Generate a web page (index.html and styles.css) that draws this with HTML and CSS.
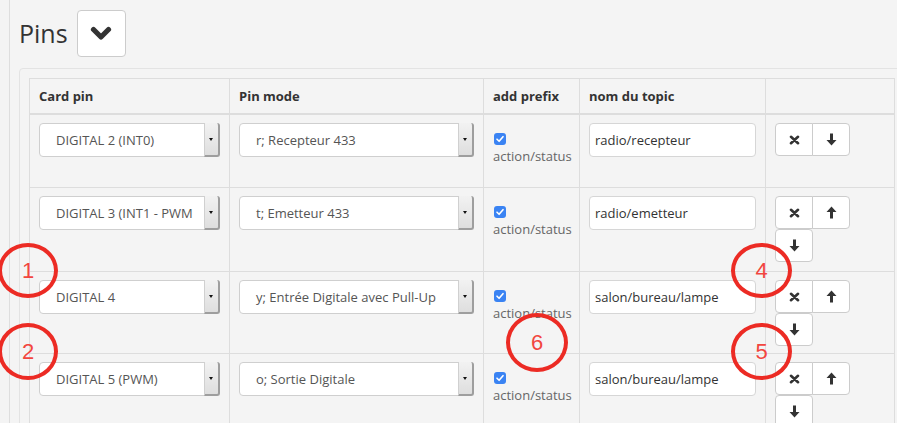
FILE: index.html
```html
<!DOCTYPE html>
<html lang="fr">
<head>
<meta charset="utf-8">
<title>Pins</title>
<link rel="stylesheet" href="styles.css">
</head>
<body>
<div class="page">
  <div class="main">
    <div class="heading">
      <h2>Pins</h2>
      <button class="toggle" type="button" aria-label="toggle">
        <svg width="22" height="15" viewBox="0 0 22 15"><polyline points="3.5,3.5 11,11 18.5,3.5" fill="none" stroke="#333" stroke-width="5.2" stroke-linecap="round" stroke-linejoin="round"/></svg>
      </button>
    </div>
    <div class="panel">
      <table class="pins">
        <colgroup>
          <col class="c-pin"><col class="c-mode"><col class="c-prefix"><col class="c-topic"><col class="c-act">
        </colgroup>
        <thead>
          <tr><th>Card pin</th><th>Pin mode</th><th>add prefix</th><th>nom du topic</th><th></th></tr>
        </thead>
        <tbody>
          <tr>
            <td><div class="select"><span class="sel-text">DIGITAL 2 (INT0)</span><span class="sel-btn"></span></div></td>
            <td><div class="select"><span class="sel-text">r; Recepteur 433</span><span class="sel-btn"></span></div></td>
            <td><div class="prefix"><span class="check"><svg width="12" height="12" viewBox="0 0 12 12"><polyline points="3,6.2 5.1,8.3 9,3.7" fill="none" stroke="#fff" stroke-width="1.6" stroke-linecap="round" stroke-linejoin="round"/></svg></span><span class="prefix-label">action/status</span></div></td>
            <td><div class="input">radio/recepteur</div></td>
            <td><div class="actions">
              <button class="btn first" type="button"><svg width="11" height="10" viewBox="0 0 11 10"><path d="M2 1.8L9 8.2M9 1.8L2 8.2" stroke="#333" stroke-width="2.6" stroke-linecap="round"/></svg></button><button class="btn last" type="button"><svg width="11" height="13" viewBox="0 0 11 13"><path d="M4 0.5h3v6.5h3.5L5.5 12.5 0.5 7H4z" fill="#333"/></svg></button>
            </div></td>
          </tr>
          <tr>
            <td><div class="select"><span class="sel-text">DIGITAL 3 (INT1 - PWM</span><span class="sel-btn"></span></div></td>
            <td><div class="select"><span class="sel-text">t; Emetteur 433</span><span class="sel-btn"></span></div></td>
            <td><div class="prefix"><span class="check"><svg width="12" height="12" viewBox="0 0 12 12"><polyline points="3,6.2 5.1,8.3 9,3.7" fill="none" stroke="#fff" stroke-width="1.6" stroke-linecap="round" stroke-linejoin="round"/></svg></span><span class="prefix-label">action/status</span></div></td>
            <td><div class="input">radio/emetteur</div></td>
            <td><div class="actions">
              <button class="btn first" type="button"><svg width="11" height="10" viewBox="0 0 11 10"><path d="M2 1.8L9 8.2M9 1.8L2 8.2" stroke="#333" stroke-width="2.6" stroke-linecap="round"/></svg></button><button class="btn last" type="button"><svg width="11" height="13" viewBox="0 0 11 13"><path d="M5.5 0.5L10.5 6H7v6.5H4V6H0.5z" fill="#333"/></svg></button><button class="btn alone" type="button"><svg width="11" height="13" viewBox="0 0 11 13"><path d="M4 0.5h3v6.5h3.5L5.5 12.5 0.5 7H4z" fill="#333"/></svg></button>
            </div></td>
          </tr>
          <tr class="tight">
            <td><div class="select"><span class="sel-text">DIGITAL 4</span><span class="sel-btn"></span></div></td>
            <td><div class="select"><span class="sel-text">y; Entrée Digitale avec Pull-Up</span><span class="sel-btn"></span></div></td>
            <td><div class="prefix"><span class="check"><svg width="12" height="12" viewBox="0 0 12 12"><polyline points="3,6.2 5.1,8.3 9,3.7" fill="none" stroke="#fff" stroke-width="1.6" stroke-linecap="round" stroke-linejoin="round"/></svg></span><span class="prefix-label">action/status</span></div></td>
            <td><div class="input">salon/bureau/lampe</div></td>
            <td><div class="actions">
              <button class="btn first" type="button"><svg width="11" height="10" viewBox="0 0 11 10"><path d="M2 1.8L9 8.2M9 1.8L2 8.2" stroke="#333" stroke-width="2.6" stroke-linecap="round"/></svg></button><button class="btn last" type="button"><svg width="11" height="13" viewBox="0 0 11 13"><path d="M5.5 0.5L10.5 6H7v6.5H4V6H0.5z" fill="#333"/></svg></button><button class="btn alone" type="button"><svg width="11" height="13" viewBox="0 0 11 13"><path d="M4 0.5h3v6.5h3.5L5.5 12.5 0.5 7H4z" fill="#333"/></svg></button>
            </div></td>
          </tr>
          <tr>
            <td><div class="select"><span class="sel-text">DIGITAL 5 (PWM)</span><span class="sel-btn"></span></div></td>
            <td><div class="select"><span class="sel-text">o; Sortie Digitale</span><span class="sel-btn"></span></div></td>
            <td><div class="prefix"><span class="check"><svg width="12" height="12" viewBox="0 0 12 12"><polyline points="3,6.2 5.1,8.3 9,3.7" fill="none" stroke="#fff" stroke-width="1.6" stroke-linecap="round" stroke-linejoin="round"/></svg></span><span class="prefix-label">action/status</span></div></td>
            <td><div class="input">salon/bureau/lampe</div></td>
            <td><div class="actions">
              <button class="btn first" type="button"><svg width="11" height="10" viewBox="0 0 11 10"><path d="M2 1.8L9 8.2M9 1.8L2 8.2" stroke="#333" stroke-width="2.6" stroke-linecap="round"/></svg></button><button class="btn last" type="button"><svg width="11" height="13" viewBox="0 0 11 13"><path d="M5.5 0.5L10.5 6H7v6.5H4V6H0.5z" fill="#333"/></svg></button><button class="btn alone" type="button"><svg width="11" height="13" viewBox="0 0 11 13"><path d="M4 0.5h3v6.5h3.5L5.5 12.5 0.5 7H4z" fill="#333"/></svg></button>
            </div></td>
          </tr>
        </tbody>
      </table>
    </div>
  </div>
</div>
<div class="mark m1">1</div>
<div class="mark m2">2</div>
<div class="mark m4">4</div>
<div class="mark m5">5</div>
<div class="mark m6">6</div>
</body>
</html>
```

FILE: styles.css
```css
html, body {
  margin: 0;
  padding: 0;
}
body {
  background: #f4f4f4;
  font-family: "Open Sans", "DejaVu Sans", sans-serif;
  font-size: 13px;
  color: #333;
  overflow: hidden;
  width: 897px;
  height: 423px;
  position: relative;
}
.page {
  padding-left: 9px;
}
.main {
  border-left: 1px solid #dedede;
  height: 423px;
  box-sizing: border-box;
  padding: 10px 0 0 9px;
}
.heading {
  display: flex;
  align-items: center;
  gap: 9px;
  margin-bottom: 11px;
}
.heading h2 {
  margin: 0;
  font-size: 25px;
  font-weight: 400;
  line-height: 47px;
  color: #333;
}
.toggle {
  width: 49px;
  height: 47px;
  background: #fff;
  border: 1px solid #ccc;
  border-radius: 4px;
  padding: 0;
  display: flex;
  align-items: center;
  justify-content: center;
}
.panel {
  width: 885px;
  box-sizing: border-box;
  border: 1px solid #e3e3e3;
  border-radius: 4px;
  padding: 9px;
  background: #f4f4f4;
}
.pins {
  border-collapse: collapse;
  table-layout: fixed;
  width: 865px;
}
.c-pin { width: 200px; }
.c-mode { width: 254px; }
.c-prefix { width: 96px; }
.c-topic { width: 186px; }
.c-act { width: 129px; }
.pins th, .pins td {
  border: 1px solid #ddd;
  padding: 8px 9px 9px;
  text-align: left;
  vertical-align: top;
}
.pins th {
  font-weight: 700;
  line-height: 18px;
  padding-bottom: 8px;
  border-bottom-width: 2px;
  color: #333;
}
.pins tr.tight td {
  padding-bottom: 7px;
}
.select {
  display: flex;
  height: 34px;
  box-sizing: border-box;
  background: #fff;
  border: 1px solid #cfcfcf;
  border-radius: 4px;
  color: #555;
  line-height: 32px;
}
.sel-text {
  flex: 1;
  min-width: 0;
  overflow: hidden;
  white-space: nowrap;
  padding-left: 16px;
}
.sel-btn {
  width: 13px;
  flex: none;
  background: linear-gradient(#f2f2f2, #dedede);
  border-left: 1px solid #d0d0d0;
  border-right: 2px solid #9e9e9e;
  border-bottom: 2px solid #9e9e9e;
  border-radius: 0 3px 3px 0;
  margin: -1px -1px -1px 0;
  position: relative;
}
.sel-btn::after {
  content: "";
  position: absolute;
  left: 4px;
  top: 15px;
  border-left: 2.5px solid transparent;
  border-right: 2.5px solid transparent;
  border-top: 3px solid #111;
}
.prefix {
  margin: 10px 0 12px;
  display: flex;
  flex-direction: column;
  align-items: flex-start;
}
.check {
  width: 12px;
  height: 12px;
  border-radius: 3px;
  background: #3a83f3;
  margin-left: 1px;
  margin-bottom: 2px;
  display: flex;
}
.prefix-label {
  color: #666;
  line-height: 19px;
  white-space: nowrap;
}
.input {
  height: 34px;
  box-sizing: border-box;
  background: #fff;
  border: 1px solid #d6d6d6;
  border-radius: 4px;
  padding: 0 5px;
  line-height: 32px;
  color: #333;
  white-space: nowrap;
  overflow: hidden;
}
.actions {
  display: flex;
  flex-wrap: wrap;
  width: 110px;
}
.btn {
  width: 38px;
  height: 33px;
  box-sizing: border-box;
  background: #fff;
  border: 1px solid #ccc;
  padding: 0;
  display: flex;
  align-items: center;
  justify-content: center;
}
.btn.first {
  border-radius: 4px 0 0 4px;
}
.btn.last {
  border-radius: 0 4px 4px 0;
  margin-left: -1px;
}
.btn.alone {
  border-radius: 4px;
}
.mark {
  position: absolute;
  box-sizing: border-box;
  border: 4px solid #ec2b24;
  border-radius: 50%;
  display: flex;
  align-items: center;
  justify-content: center;
  color: #f2463f;
  font-family: "Liberation Sans", Arial, sans-serif;
  font-size: 22px;
}
.m1 { left: -2px; top: 243px; width: 60px; height: 55px; }
.m2 { left: -2px; top: 323px; width: 60px; height: 57px; }
.m4 { left: 731px; top: 243px; width: 61px; height: 55px; }
.m5 { left: 731px; top: 323px; width: 61px; height: 57px; }
.m6 { left: 506px; top: 313px; width: 62px; height: 59px; }
```
